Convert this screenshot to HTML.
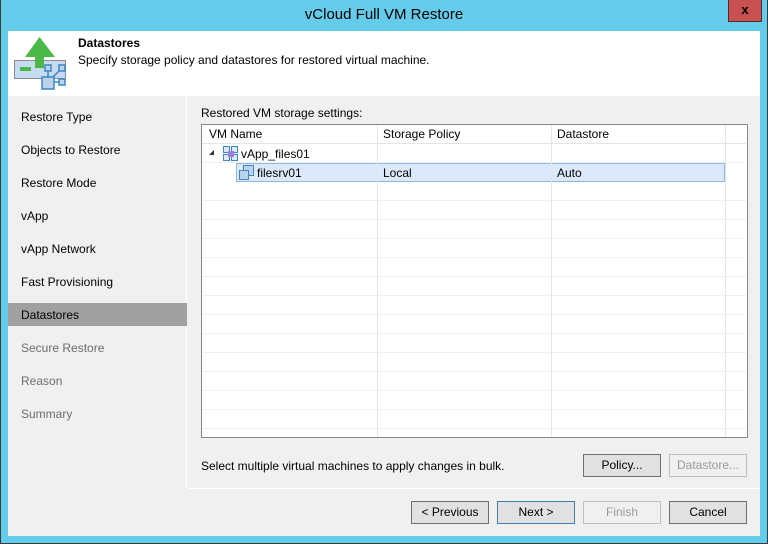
<!DOCTYPE html>
<html><head><style>
*{margin:0;padding:0;box-sizing:border-box}
body{width:768px;height:544px;background:#65cbeb;font-family:"Liberation Sans",sans-serif;font-size:12px;color:#000;position:relative;overflow:hidden}
.a{position:absolute}
.win{left:0;top:0;width:768px;height:544px;border:1px solid #3a3a3a;border-top:none}
.title{left:0;top:6px;width:768px;text-align:center;font-size:15px;color:#000}
.close{left:728px;top:0px;width:34px;height:22px;background:#c75050;border:1px solid #5a2a2a;border-top:none;color:#000;font-weight:bold;font-size:13px;text-align:center;line-height:20px}
.client{left:8px;top:31px;width:752px;height:505px;background:#f0f0f0}
.hdr{left:8px;top:31px;width:752px;height:65px;background:#fff}
.nav{left:8px;top:96px;width:179px;height:392px;background:#f0f0f0;border-right:1px solid #fff}
.nv{position:absolute;left:21px;font-size:12px;color:#000}
.dis{color:#6d6d6d}
.btn{position:absolute;height:23px;width:78px;border:1px solid #707070;background:#e1e1e1;text-align:center;line-height:21px;font-size:12px}
.btn.d{border-color:#bfbfbf;background:#f0f0f0;color:#9a9a9a}
.hl{position:absolute;left:202px;width:544px;height:1px;background:#f0f0f0}
.vl{position:absolute;top:125px;width:1px;height:312px;background:#f0f0f0}
</style></head><body>
<div class="a win"></div>
<div class="a title">vCloud Full VM Restore</div>
<div class="a close">x</div>
<div class="a client"></div>
<div class="a hdr"></div>
<svg class="a" style="left:0;top:0" width="80" height="96">
<rect x="14.5" y="60.5" width="51" height="18" fill="#c6daf1" stroke="#8a8a8a"/>
<polygon points="39.5,37 55,57 44,57 44,68 35,68 35,57 25,57" fill="#4cb847"/>
<rect x="20" y="67" width="11" height="4" fill="#4cb847"/>
<g fill="#bcd3ee" stroke="#3f86c2" stroke-width="1.5">
<line x1="48" y1="70" x2="48" y2="78"/><line x1="50" y1="80" x2="61" y2="69"/><line x1="52" y1="82" x2="61" y2="82"/>
<rect x="45" y="65" width="6" height="6"/><rect x="59" y="65" width="6" height="6"/><rect x="42" y="77" width="12" height="12"/><rect x="59" y="79" width="6" height="6"/>
</g></svg>
<div class="a" style="left:78px;top:36px;font-weight:bold;font-size:12px">Datastores</div>
<div class="a" style="left:78px;top:53px">Specify storage policy and datastores for restored virtual machine.</div>
<div class="a nav"></div>
<div class="a" style="left:8px;top:303px;width:179px;height:23px;background:#a0a0a0"></div>
<div class="nv" style="top:110px">Restore Type</div>
<div class="nv" style="top:143px">Objects to Restore</div>
<div class="nv" style="top:176px">Restore Mode</div>
<div class="nv" style="top:209px">vApp</div>
<div class="nv" style="top:242px">vApp Network</div>
<div class="nv" style="top:275px">Fast Provisioning</div>
<div class="nv" style="top:308px">Datastores</div>
<div class="nv dis" style="top:341px">Secure Restore</div>
<div class="nv dis" style="top:374px">Reason</div>
<div class="nv dis" style="top:407px">Summary</div>
<div class="a" style="left:201px;top:106px">Restored VM storage settings:</div>
<div class="a" style="left:201px;top:124px;width:547px;height:314px;background:#fff;border:1px solid #828790"></div>
<div class="a" style="left:202px;top:125px;width:544px;height:19px;border-bottom:1px solid #e5e5e5"></div>
<div class="a" style="left:236px;top:163px;width:489px;height:19px;background:#dbe9fa;border:1px solid #90b8e6"></div>
<div class="hl" style="top:162px"></div><div class="hl" style="top:200px"></div><div class="hl" style="top:219px"></div><div class="hl" style="top:238px"></div><div class="hl" style="top:257px"></div><div class="hl" style="top:276px"></div><div class="hl" style="top:295px"></div><div class="hl" style="top:314px"></div><div class="hl" style="top:333px"></div><div class="hl" style="top:352px"></div><div class="hl" style="top:371px"></div><div class="hl" style="top:390px"></div><div class="hl" style="top:409px"></div><div class="hl" style="top:428px"></div>
<div class="vl" style="left:377px;background:#e5e5e5"></div><div class="vl" style="left:551px;background:#e5e5e5"></div><div class="vl" style="left:725px;background:#e5e5e5"></div>
<div class="a" style="left:209px;top:127px">VM Name</div>
<div class="a" style="left:383px;top:127px">Storage Policy</div>
<div class="a" style="left:557px;top:127px">Datastore</div>
<div class="a" style="left:209px;top:150px;width:0;height:0;border-left:5px solid transparent;border-bottom:5px solid #333"></div>
<svg class="a" style="left:222px;top:145px" width="18" height="17"><g fill="#dbe9fa" stroke="#3f86c2"><rect x="1.5" y="1.5" width="6" height="6"/><rect x="9.5" y="1.5" width="6" height="6"/><rect x="1.5" y="9.5" width="6" height="6"/><rect x="9.5" y="9.5" width="6" height="6"/></g><rect x="6" y="6" width="6" height="6" fill="#9b7fe0"/></svg>
<div class="a" style="left:241px;top:147px">vApp_files01</div>
<svg class="a" style="left:238px;top:164px" width="18" height="17"><g fill="#bcd3ee" stroke="#3f86c2"><rect x="5.5" y="1.5" width="10" height="10"/><rect x="1.5" y="6.5" width="9" height="9"/></g></svg>
<div class="a" style="left:257px;top:166px">filesrv01</div>
<div class="a" style="left:383px;top:166px">Local</div>
<div class="a" style="left:557px;top:166px">Auto</div>
<div class="a" style="left:201px;top:459px">Select multiple virtual machines to apply changes in bulk.</div>
<div class="btn" style="left:583px;top:454px">Policy...</div>
<div class="btn d" style="left:669px;top:454px">Datastore...</div>
<div class="a" style="left:188px;top:488px;width:572px;height:1px;background:#fff"></div>
<div class="btn" style="left:411px;top:501px">&lt; Previous</div>
<div class="btn" style="left:497px;top:501px;border-color:#3c7fb1">Next &gt;</div>
<div class="btn d" style="left:583px;top:501px">Finish</div>
<div class="btn" style="left:669px;top:501px">Cancel</div>
</body></html>
